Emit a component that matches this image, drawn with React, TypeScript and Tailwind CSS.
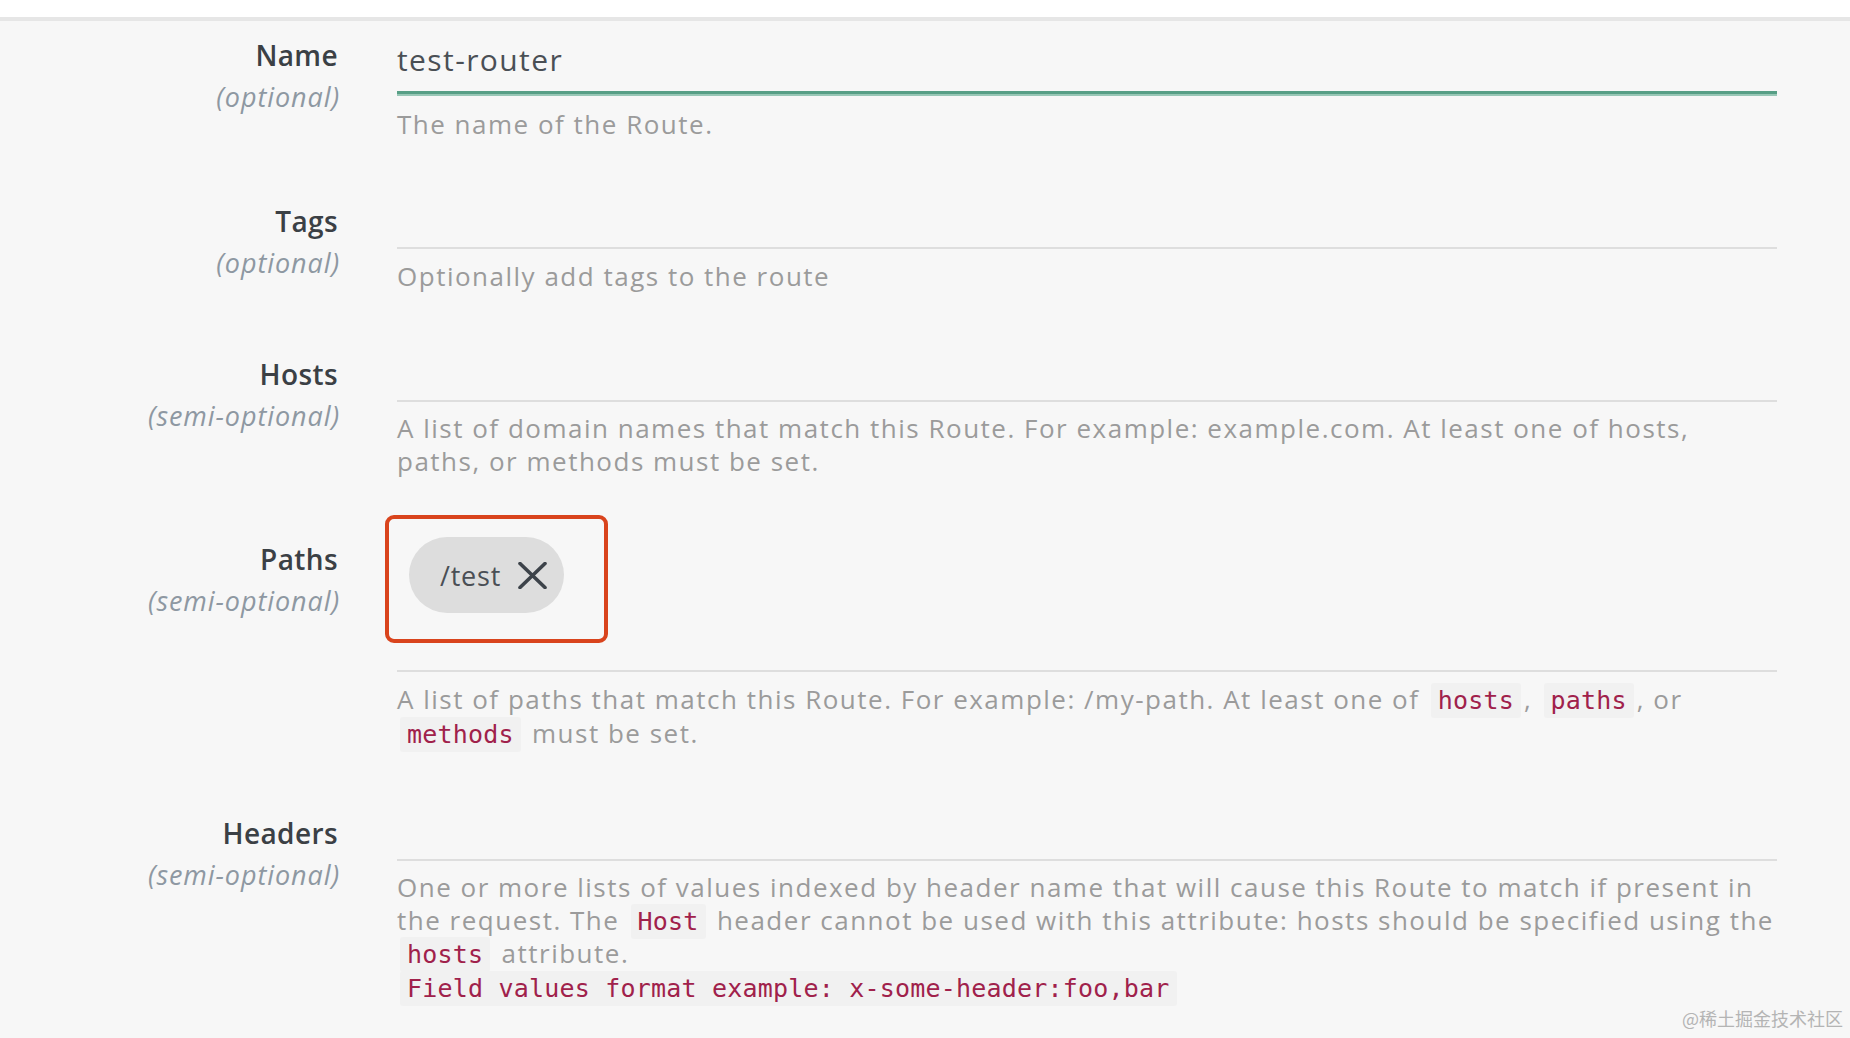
import type { ReactNode } from 'react'

const sans = { fontFamily: '"Open Sans", "Liberation Sans", sans-serif' }

function Code({ children }: { children: ReactNode }) {
  return (
    <code className="mx-[3px] rounded-[3px] bg-[#f1f1f1] px-[7px] py-[3px] font-['DejaVu_Sans_Mono',monospace] text-[25px] leading-none tracking-[0.2px] text-[#a0214b]">
      {children}
    </code>
  )
}

function Label({ name, hint, top }: { name: string; hint: string; top: string }) {
  return (
    <div className={`w-[338px] shrink-0 text-right ${top}`}>
      <div className="text-[28px] leading-[34px] font-semibold tracking-[0.4px] text-[#3b4045]">{name}</div>
      <div className="mt-2 mr-[-2px] text-[27px] leading-[34px] italic tracking-[0.9px] text-[#8e98a2]">{hint}</div>
    </div>
  )
}

function Help({ children, className = '' }: { children: ReactNode; className?: string }) {
  return <div className={`whitespace-nowrap text-[26px] leading-[33px] tracking-[1.5px] text-[#9b9b9b] ${className}`}>{children}</div>
}

export default function App() {
  return (
    <div style={sans} className="relative min-h-[1038px] w-[1850px] overflow-hidden bg-[#f7f7f7]">
      <div className="h-[17px] bg-white" />
      <div className="h-[4px] bg-[#e6e6e6]" />

      {/* Name */}
      <div className="mt-[17px] flex">
        <Label name="Name" hint="(optional)" top="" />
        <div className="ml-[59px] w-[1380px]">
          <div className="border-b-[3px] border-[#579f86] pt-[5px] pb-[14px] text-[30px] leading-[34px] tracking-[1.4px] text-[#4a4f55] shadow-[0_2px_0_#98c7b6]">
            test-router
          </div>
          <Help className="mt-[14px]">The name of the Route.</Help>
        </div>
      </div>

      {/* Tags */}
      <div className="mt-[63px] flex">
        <Label name="Tags" hint="(optional)" top="" />
        <div className="ml-[59px] w-[1380px]">
          <div className="h-[45px] border-b-2 border-[#dedede]" />
          <Help className="mt-[11px]">Optionally add tags to the route</Help>
        </div>
      </div>

      {/* Hosts */}
      <div className="mt-[64px] flex">
        <Label name="Hosts" hint="(semi-optional)" top="" />
        <div className="ml-[59px] w-[1380px]">
          <div className="h-[45px] border-b-2 border-[#dedede]" />
          <Help className="mt-[10px]">
            A list of domain names that match this Route. For example: example.com. At least one of hosts,
            <br />
            paths, or methods must be set.
          </Help>
        </div>
      </div>

      {/* Paths */}
      <div className="mt-[37px] flex">
        <Label name="Paths" hint="(semi-optional)" top="pt-[27px]" />
        <div className="ml-[59px] w-[1380px]">
          <div className="border-b-2 border-[#dedede] pb-[27px]">
            <div className="ml-[-12px] inline-block rounded-[9px] border-4 border-[#d9441d] pt-[18px] pr-[40px] pb-[26px] pl-[20px]">
              <div className="flex h-[76px] w-[155px] items-center rounded-full bg-[#dddddd] pl-[31px]">
                <span className="text-[27px] leading-none tracking-[0.8px] text-[#4a4f55]">/test</span>
                <svg className="ml-[17px]" width="29" height="27" viewBox="0 0 29 27" fill="none">
                  <path d="M2 1.5 27 25.5M27 1.5 2 25.5" stroke="#3d434a" strokeWidth="3.6" strokeLinecap="round" />
                </svg>
              </div>
            </div>
          </div>
          <Help className="mt-[10px] leading-[34px]">
            A list of paths that match this Route. For example: /my-path. At least one of <Code>hosts</Code>, <Code>paths</Code>, or
            <br />
            <Code>methods</Code> must be set.
          </Help>
        </div>
      </div>

      {/* Headers */}
      <div className="mt-[66px] flex">
        <Label name="Headers" hint="(semi-optional)" top="" />
        <div className="ml-[59px] w-[1380px]">
          <div className="h-[45px] border-b-2 border-[#dedede]" />
          <Help className="mt-[10px]">
            One or more lists of values indexed by header name that will cause this Route to match if present in
            <br />
            the request. The <Code>Host</Code> header cannot be used with this attribute: hosts should be specified using the
            <br />
            <Code>hosts</Code> attribute.
          </Help>
          <div className="mt-[3px] leading-[36px]">
            <Code>Field values format example: x-some-header:foo,bar</Code>
          </div>
        </div>
      </div>

      <div className="absolute right-[7px] bottom-[6px] font-['Noto_Sans_CJK_SC',sans-serif] text-[18px] text-[#b4b4b4]">
        @稀土掘金技术社区
      </div>
    </div>
  )
}
